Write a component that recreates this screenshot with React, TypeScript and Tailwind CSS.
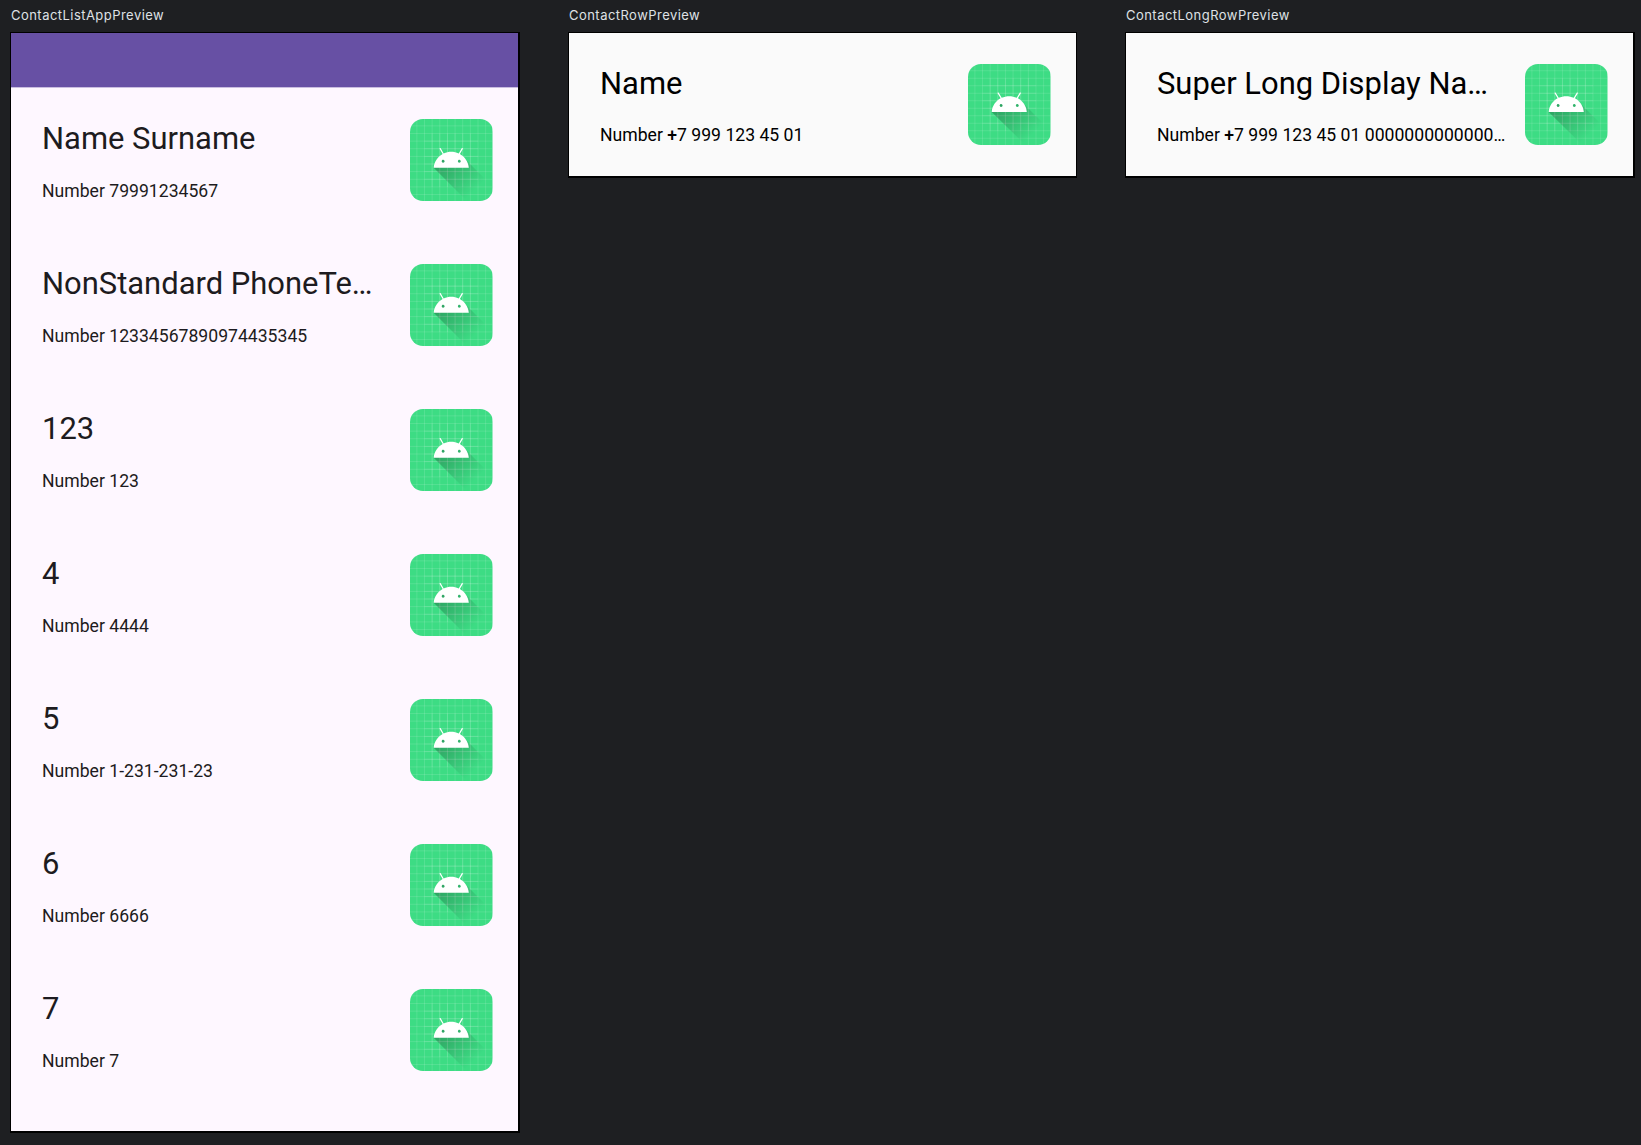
import React from 'react';

const LINES = [9, 19, 29, 39, 49, 59, 69, 79, 89, 99];
const INNER = [29, 39, 49, 59, 69, 79];

function AndroidIcon({ id, className }: { id: string; className: string }) {
  return (
    <svg viewBox="0 0 108 108" preserveAspectRatio="none" className={`shrink-0 rounded-[13px] ${className}`}>
      <defs>
        <linearGradient id={id} gradientUnits="userSpaceOnUse" x1="42.95" y1="49.6" x2="85.85" y2="92.5">
          <stop offset="0" stopColor="#000" stopOpacity="0.267" />
          <stop offset="1" stopColor="#000" stopOpacity="0" />
        </linearGradient>
      </defs>
      <rect width="108" height="108" fill="#3DDC84" />
      <g stroke="#fff" strokeOpacity="0.2" strokeWidth="0.8">
        {LINES.map((n) => (
          <React.Fragment key={n}>
            <path d={`M${n},0V108`} />
            <path d={`M0,${n}H108`} />
          </React.Fragment>
        ))}
        {INNER.map((n) => (
          <React.Fragment key={n}>
            <path d={`M19,${n}H89`} />
            <path d={`M${n},19V89`} />
          </React.Fragment>
        ))}
      </g>
      <path
        fill={`url(#${id})`}
        d="M31,63.928c0,0 6.4,-11 12.1,-13.1c7.2,-2.6 26,-1.4 26,-1.4l38.1,38.1L107,108.928l-32,-1L31,63.928z"
      />
      <path
        fill="#fff"
        fillRule="nonzero"
        d="M65.3,45.828l3.8,-6.6c0.2,-0.4 0.1,-0.9 -0.3,-1.1c-0.4,-0.2 -0.9,-0.1 -1.1,0.3l-3.9,6.7c-6.3,-2.8 -13.4,-2.8 -19.7,0l-3.9,-6.7c-0.2,-0.4 -0.7,-0.5 -1.1,-0.3C38.8,38.328 38.7,38.828 38.9,39.228l3.8,6.6C36.2,49.428 31.7,56.028 31,63.928h46C76.3,56.028 71.8,49.428 65.3,45.828zM43.4,57.328c-0.8,0 -1.5,-0.5 -1.8,-1.2c-0.3,-0.7 -0.1,-1.5 0.4,-2.1c0.5,-0.5 1.4,-0.7 2.1,-0.4c0.7,0.3 1.2,1 1.2,1.8C45.3,56.528 44.5,57.328 43.4,57.328L43.4,57.328zM64.6,57.328c-0.8,0 -1.5,-0.5 -1.8,-1.2s-0.1,-1.5 0.4,-2.1c0.5,-0.5 1.4,-0.7 2.1,-0.4c0.7,0.3 1.2,1 1.2,1.8C66.5,56.528 65.6,57.328 64.6,57.328L64.6,57.328z"
      />
    </svg>
  );
}

function ContactRow({ id, name, number, compact }: { id: string; name: string; number: React.ReactNode; compact?: boolean }) {
  return (
    <div className={`flex items-start justify-between pl-[31px] pr-[25.5px] pt-[31px] ${compact ? 'h-[143px] text-black' : 'h-[145px] text-[#1d1b20]'}`}>
      <div className="whitespace-nowrap pt-px">
        <div className="h-[59px] text-[30.95px] leading-[38px]">{name}</div>
        <div className={`text-[17.63px] leading-6 ${compact ? '-mt-px' : ''}`}>{number}</div>
      </div>
      <AndroidIcon id={id} className={compact ? 'h-[81px] w-[82.5px]' : '-mt-[0.4px] h-[82.4px] w-[82.5px]'} />
    </div>
  );
}

function Preview({ title, className, children }: { title: string; className: string; children: React.ReactNode }) {
  return (
    <section>
      <h2 className="h-8 pl-px pt-[5px] font-['Inter',sans-serif] text-[13px] leading-5 tracking-[0.46px] text-[#dfe1e5]">{title}</h2>
      <div className={`box-content w-[507px] overflow-hidden border-l border-t border-b-2 border-black ${className}`}>{children}</div>
    </section>
  );
}

const CONTACTS = [
  ['Name Surname', '79991234567'],
  ['NonStandard PhoneTe…', '12334567890974435345'],
  ['123', '123'],
  ['4', '4444'],
  ['5', '1-231-231-23'],
  ['6', '6666'],
  ['7', '7'],
];

export default function App() {
  return (
    <main className="flex h-[1145px] w-[1641px] items-start gap-[48px] overflow-hidden bg-[#1e1f22] pl-[10px] font-['Roboto',sans-serif]">
      <Preview title="ContactListAppPreview" className="h-[1098px] border-r-2 bg-[#fef7ff]">
        <div className="h-[55px] border-b border-[#c9bde0] bg-[#6750a4]" />
        {CONTACTS.map(([name, number]) => (
          <ContactRow key={name} id={`list-${number}`} name={name} number={`Number ${number}`} />
        ))}
      </Preview>
      <Preview title="ContactRowPreview" className="h-[143px] border-r bg-[#fafafa]">
        <ContactRow id="row" name="Name" number={<>Number <span className="font-medium">+</span>7 999 123 45 01</>} compact />
      </Preview>
      <Preview title="ContactLongRowPreview" className="h-[143px] border-r-2 bg-[#fafafa]">
        <ContactRow
          id="long-row"
          name="Super Long Display Na…"
          number={<>Number <span className="font-medium">+</span>7 999 123 45 01 0000000000000…</>}
          compact
        />
      </Preview>
    </main>
  );
}
